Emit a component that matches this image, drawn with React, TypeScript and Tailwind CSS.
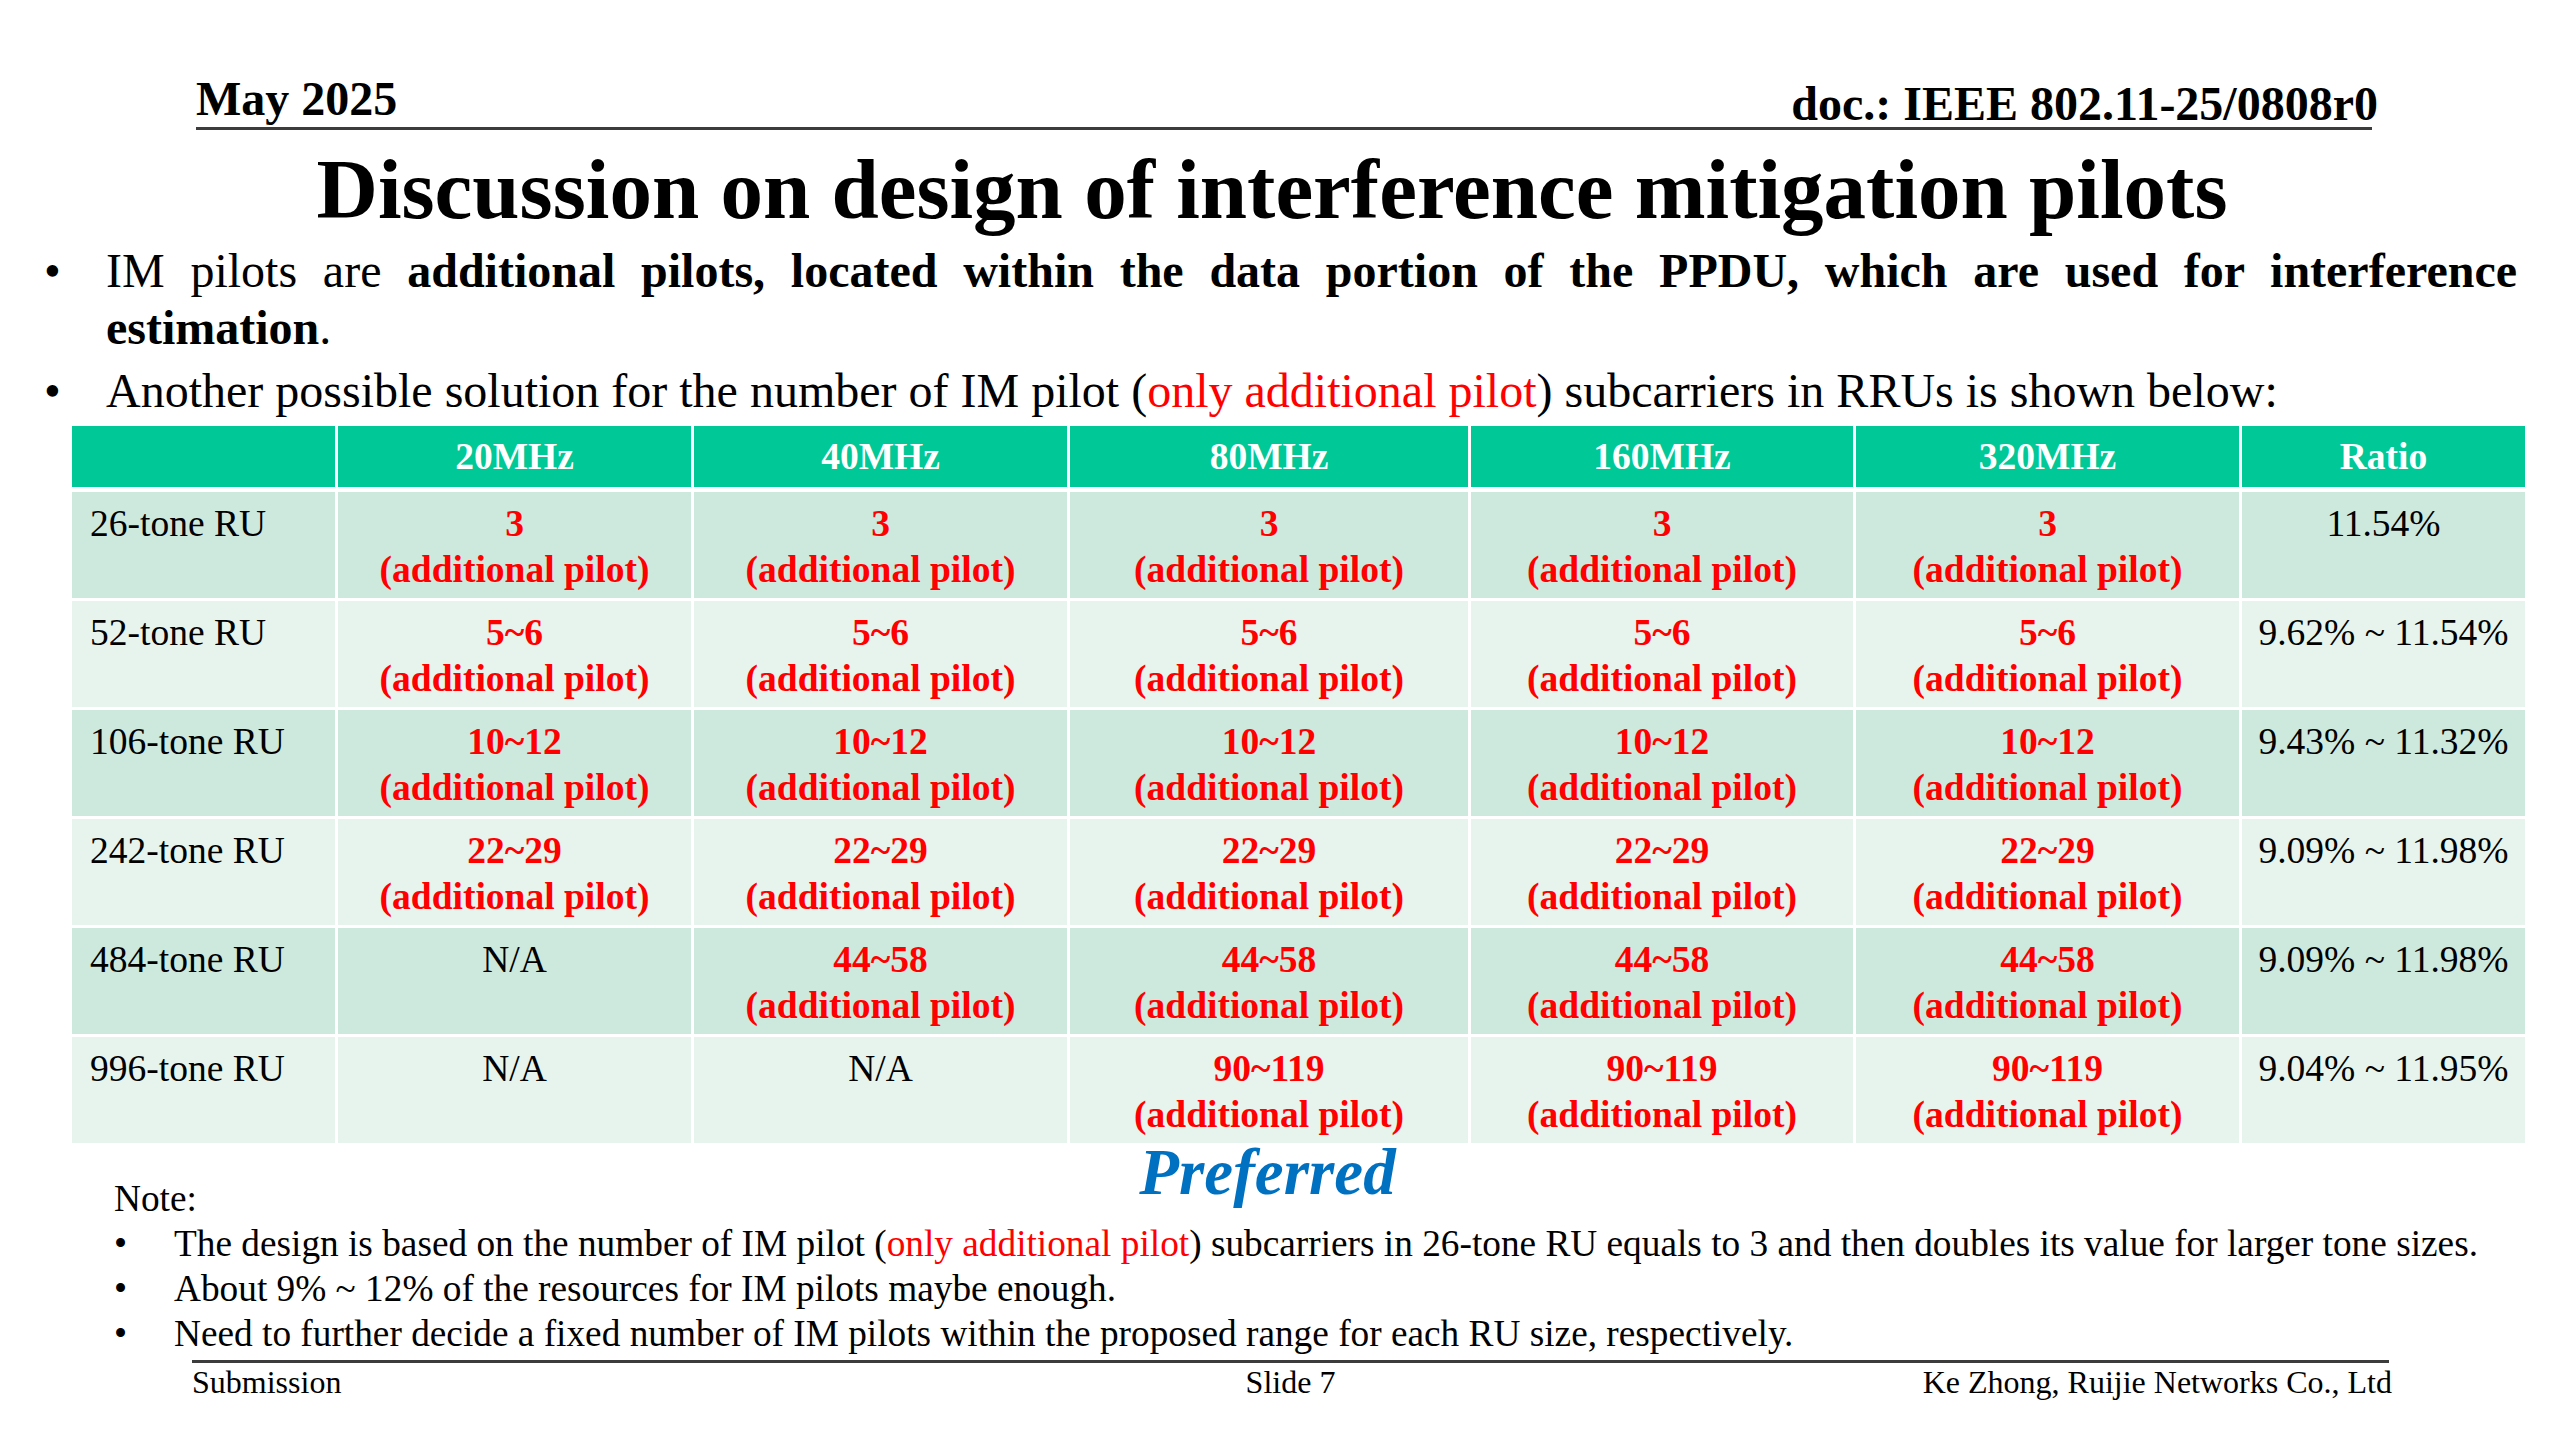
const cols = "grid grid-cols-[263px_356px_376px_401px_385px_386px_286px]";

type Cell = { v: string; red?: boolean };

const pilot = (v: string): Cell => ({ v, red: true });
const na: Cell = { v: "N/A" };

const rows: { label: string; cells: Cell[]; ratio: string }[] = [
  { label: "26-tone RU", cells: [pilot("3"), pilot("3"), pilot("3"), pilot("3"), pilot("3")], ratio: "11.54%" },
  { label: "52-tone RU", cells: [pilot("5~6"), pilot("5~6"), pilot("5~6"), pilot("5~6"), pilot("5~6")], ratio: "9.62% ~ 11.54%" },
  { label: "106-tone RU", cells: [pilot("10~12"), pilot("10~12"), pilot("10~12"), pilot("10~12"), pilot("10~12")], ratio: "9.43% ~ 11.32%" },
  { label: "242-tone RU", cells: [pilot("22~29"), pilot("22~29"), pilot("22~29"), pilot("22~29"), pilot("22~29")], ratio: "9.09% ~ 11.98%" },
  { label: "484-tone RU", cells: [na, pilot("44~58"), pilot("44~58"), pilot("44~58"), pilot("44~58")], ratio: "9.09% ~ 11.98%" },
  { label: "996-tone RU", cells: [na, na, pilot("90~119"), pilot("90~119"), pilot("90~119")], ratio: "9.04% ~ 11.95%" },
];

const headers = ["20MHz", "40MHz", "80MHz", "160MHz", "320MHz", "Ratio"];

const PilotTable = () => {
  return (
    <div className="relative ml-[72px] mt-[7px] w-[2453px]">
      {/* header row */}
      <div className={`${cols} h-[61px] bg-[#00c896]`}>
        <div />
        {headers.map((h) => (
          <div
            key={h}
            className="flex items-center justify-center border-l-[3px] border-white text-[37.5px] leading-[44px] font-bold text-white"
          >
            {h}
          </div>
        ))}
      </div>

      {/* body */}
      <div className="mt-[5px] flex flex-col gap-[3px]">
        {rows.map((r, i) => (
          <div
            key={r.label}
            className={`${cols} h-[106px] text-[37.5px] leading-[46px] ${i % 2 === 0 ? "bg-[#cde9de]" : "bg-[#e7f4ee]"}`}
          >
            <div className="pl-[18px] pt-[9px] text-black">{r.label}</div>
            {r.cells.map((c, j) => (
              <div key={j} className="border-l-[3px] border-white pt-[9px] text-center">
                {c.red ? (
                  <div className="font-bold text-[#ff0000]">
                    <div>{c.v}</div>
                    <div>(additional pilot)</div>
                  </div>
                ) : (
                  <div className="text-black">{c.v}</div>
                )}
              </div>
            ))}
            <div className="border-l-[3px] border-white pt-[9px] text-center text-black">{r.ratio}</div>
          </div>
        ))}
      </div>

      {/* annotation over the gap below the 80MHz column */}
      <div className="absolute top-full -mt-[3px] left-[995px] w-[401px] text-center text-[65px] leading-none font-bold italic text-[#0070c0]">
        Preferred
      </div>
    </div>
  );
};

const App = () => {
  return (
    <div className="w-[2560px] h-[1440px] overflow-hidden bg-white text-black font-['Liberation_Serif','Times_New_Roman',serif]">
      {/* slide header */}
      <div className="pt-[75px]">
        <div className="ml-[196px] flex w-[2176px] items-end justify-between border-b-[3px] border-[#3c3c3c]">
          <span className="mb-[4px] text-[48px] leading-[48px] font-bold">May 2025</span>
          <span className="-mr-[6px] -mb-[1px] text-[48px] leading-[48px] font-bold">doc.: IEEE 802.11-25/0808r0</span>
        </div>
      </div>

      <h1 className="mt-[17px] pr-[16px] text-center text-[85px] leading-[85px] font-bold">
        Discussion on design of interference mitigation pilots
      </h1>

      {/* bullets */}
      <div className="mt-[10px] text-[48px] leading-[57px]">
        <div className="flex">
          <span className="w-[106px] shrink-0 pl-[44px]">•</span>
          <p className="w-[2411px]">
            <span className="block text-justify [text-align-last:justify]">
              IM pilots are{" "}
              <b>additional pilots, located within the data portion of the PPDU, which are used for interference</b>
            </span>
            <b>estimation</b>.
          </p>
        </div>
        <div className="mt-[6px] flex">
          <span className="w-[106px] shrink-0 pl-[44px]">•</span>
          <p className="w-[2411px] whitespace-nowrap">
            Another possible solution for the number of IM pilot (<span className="text-[#ff0000]">only additional pilot</span>) subcarriers in RRUs is shown below:
          </p>
        </div>
      </div>

      <PilotTable />

      {/* notes */}
      <div className="ml-[114px] mt-[33px] text-[37.3px] leading-[45px]">
        <div>Note:</div>
        {[
          <>
            The design is based on the number of IM pilot (<span className="text-[#ff0000]">only additional pilot</span>) subcarriers in 26-tone RU equals to 3 and then doubles its value for larger tone sizes.
          </>,
          <>About 9% ~ 12% of the resources for IM pilots maybe enough.</>,
          <>Need to further decide a fixed number of IM pilots within the proposed range for each RU size, respectively.</>,
        ].map((t, i) => (
          <div key={i} className="flex">
            <span className="w-[60px] shrink-0">•</span>
            <span className="whitespace-nowrap">{t}</span>
          </div>
        ))}
      </div>

      {/* footer */}
      <div className="ml-[192px] mt-[4px] grid w-[2197px] grid-cols-3 border-t-[3px] border-[#3c3c3c] pt-[3px] text-[32px] leading-[32px]">
        <span>Submission</span>
        <span className="text-center">Slide 7</span>
        <span className="-mr-[3px] text-right">Ke Zhong, Ruijie Networks Co., Ltd</span>
      </div>
    </div>
  );
};

export default App;
